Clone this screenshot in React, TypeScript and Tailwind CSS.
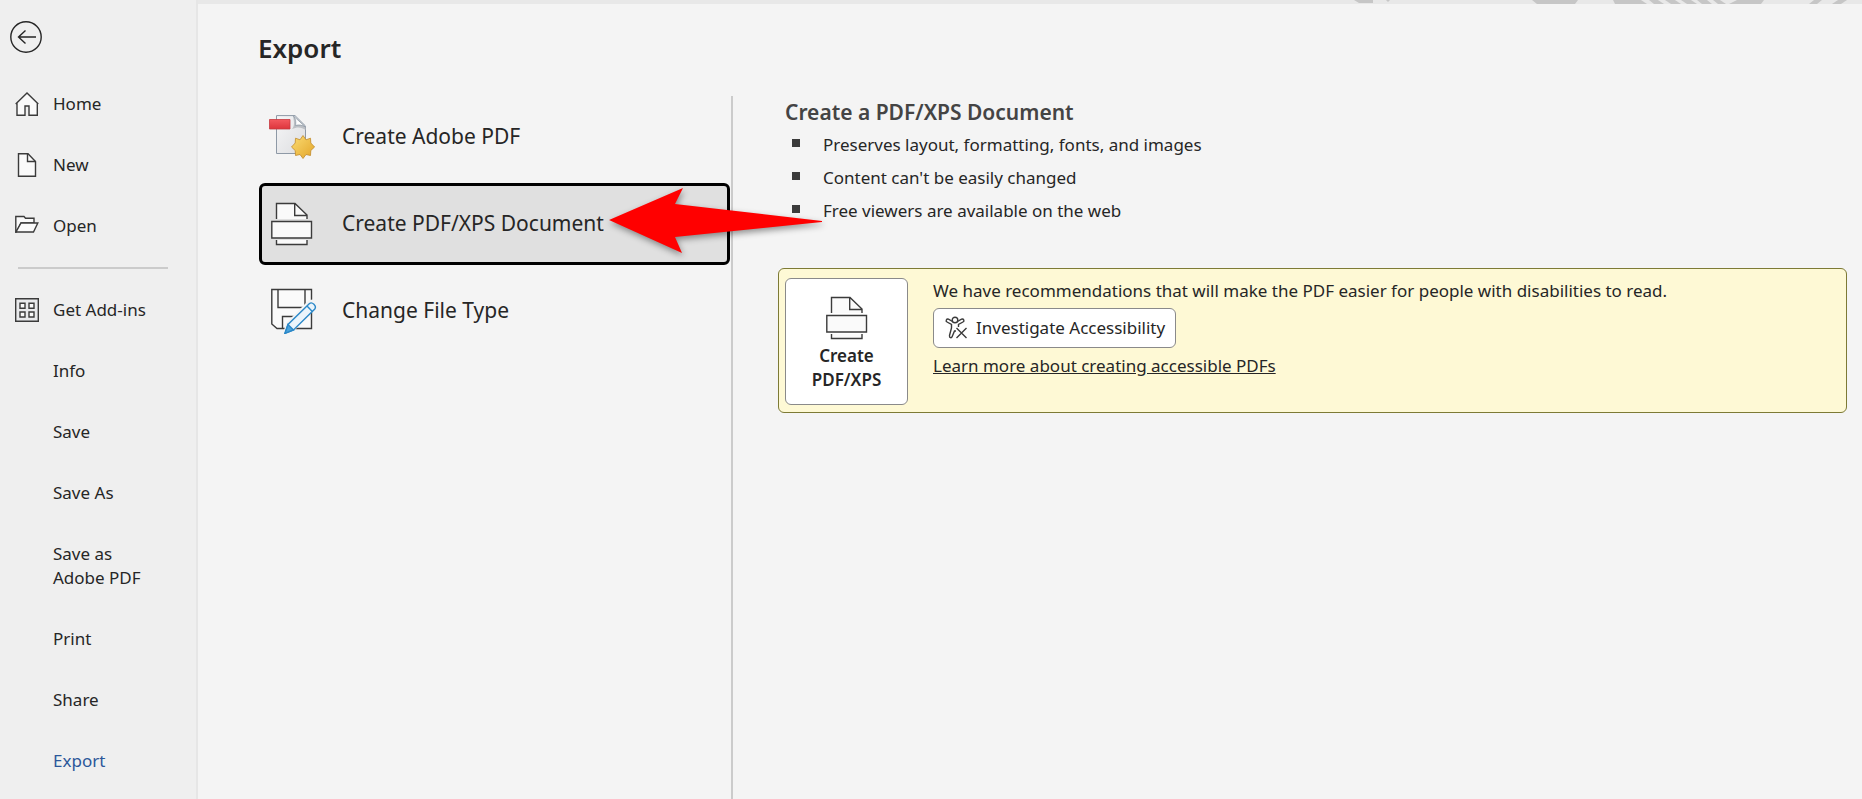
import React from 'react';

interface NavItem {
  label: string;
  icon?: React.ReactNode;
  active?: boolean;
}

const iconProps = {
  width: 24,
  height: 24,
  viewBox: '0 0 24 24',
  fill: '#fafafa',
  stroke: '#3b3b3b',
  strokeWidth: 1.4,
};

const HomeIcon = () => (
  <svg {...iconProps}>
    <path d="M2 10.5V23.3H10V14H14.3V23.3H22.3V10.5L12 1.5Z" stroke="none" />
    <path d="M.7 12 12 1 23.3 12M2 11V23.3H10V14H14V23.3H22.3V11" fill="none" />
  </svg>
);

const NewIcon = () => (
  <svg {...iconProps}>
    <path d="M3.5.8H13L20.5 8.5V23.3H3.5Z" />
    <path d="M12.5.8V8.5H20.5" fill="none" />
  </svg>
);

const OpenIcon = () => (
  <svg {...iconProps}>
    <path d="M.8 18V2.5H9L10.5 4.2H19V9H6L1.2 18Z" />
    <path d="M1 18 6 9H22.8L18.5 18Z" />
  </svg>
);

const AddInsIcon = () => (
  <svg {...iconProps}>
    <path d="M.7.7H23.3V23.3H.7Z" fill="#e9eaec" />
    <path d="M5 5.2H10V10.2H5ZM14 5.2H19V10.2H14ZM5 14H10V19H5ZM14 14H19V19H14Z" />
  </svg>
);

const PrinterIcon = () => (
  <svg width="42" height="44" viewBox="0 0 42 44" fill="#fafafa" stroke="#3b3b3b" strokeWidth="1.4">
    <path d="M5.5 17V1.5H24L36 13V17Z" stroke="none" />
    <path d="M5.5 17V1.5H24L36 13V17M23.7 1.5V13.5H36" fill="none" />
    <path d="M.8 19.5H40.5V36H.8Z" />
    <path d="M5.5 38V42.5H36V38" />
  </svg>
);

const AdobePdfIcon = () => (
  <svg width="46" height="44" viewBox="0 0 46 44">
    <defs>
      <linearGradient id="page" x1="0" y1="0" x2="1" y2="1">
        <stop offset="0" stopColor="#f6f6f7" />
        <stop offset="1" stopColor="#dcdde0" />
      </linearGradient>
      <linearGradient id="band" x1="0" y1="0" x2="0" y2="1">
        <stop offset="0" stopColor="#f4595e" />
        <stop offset="1" stopColor="#dd353c" />
      </linearGradient>
      <linearGradient id="star" x1="0" y1="0" x2="1" y2="1">
        <stop offset="0" stopColor="#fbdc74" />
        <stop offset="1" stopColor="#e3a528" />
      </linearGradient>
    </defs>
    <path d="M7.5.6H26L36.5 11V38.5H7.5Z" fill="url(#page)" stroke="#8e99a6" strokeWidth="1" />
    <path d="M24 1C25 6 26 11 23 14C28 11.5 33 12 36.5 15V11Z" fill="#bcbfc4" />
    <path d="M24 .6C27 4 27 7 26.5 10.5C30 9.5 33 10 36.5 12Z" fill="#fff" stroke="#8e99a6" strokeWidth=".8" />
    <path d="M.5 4.5H21V14H.5Z" fill="url(#band)" stroke="#c53a40" strokeWidth=".8" />
    <path
      d="M34 20.5 37 24.8 41.5 23.2 41.8 28 45.6 32 41.8 35.5 41.5 40.5 37 39.5 34 43.5 31 39.5 26.5 40.5 26.2 35.5 22.5 32 26.2 28 26.5 23.2 31 24.8Z"
      fill="url(#star)"
      stroke="#c08a2b"
      strokeWidth=".8"
    />
  </svg>
);

const FileTypeIcon = () => (
  <svg width="52" height="46" viewBox="-5 0 52 46" fill="none" stroke="#3b3b3b" strokeWidth="1.4">
    <path d="M.8 1.5H40.5V40.5H6L.8 36Z" fill="#fafafa" />
    <path d="M7 1.5V19.5H34V1.5M11.5 40.5V28.5H28" />
    <path d="M46 11 47 18 23 43 12 46 15 35 38 12Z" fill="#f4f4f4" stroke="none" />
    <path d="M14 45.3 17 36.5 38.5 15.5C41 13.5 46 17.5 43.8 21L22.5 42Z" fill="#eaf4fb" stroke="#2b88c8" />
    <path d="M14 45.3 17 36.5 22.5 42Z" fill="#4ba3db" stroke="#2b88c8" />
    <path d="M36 18 41.3 23.5" stroke="#2b88c8" />
  </svg>
);

const AccessibilityIcon = () => (
  <svg width="24" height="24" viewBox="0 0 24 24" fill="none" stroke="#3b3b3b" strokeWidth="1.4">
    <circle cx="11" cy="4" r="2.8" />
    <path d="M8.500 5.500 4.500 3.200C2.500 2.500 1.200 5 3 6L7.500 8.500V12L5.500 19.500C5.200 22 7.500 22.300 8.200 20.500L10.500 15H12M13.500 5.500 17.500 3.200C19.800 2.500 20.800 5 19 6L14.500 8.500V11" />
    <path d="M12.500 12 22.500 22M22.500 12 12.500 22" />
  </svg>
);

const primaryNav: NavItem[] = [
  { label: 'Home', icon: <HomeIcon /> },
  { label: 'New', icon: <NewIcon /> },
  { label: 'Open', icon: <OpenIcon /> },
];

const secondaryNav: NavItem[] = [
  { label: 'Get Add-ins', icon: <AddInsIcon /> },
  { label: 'Info' },
  { label: 'Save' },
  { label: 'Save As' },
  { label: 'Save as Adobe PDF' },
  { label: 'Print' },
  { label: 'Share' },
  { label: 'Export', active: true },
];

const benefits = [
  'Preserves layout, formatting, fonts, and images',
  "Content can't be easily changed",
  'Free viewers are available on the web',
];

const NavList: React.FC<{ items: NavItem[] }> = ({ items }) => (
  <ul className="flex flex-col gap-px">
    {items.map((item) => (
      <li key={item.label}>
        <button
          className={`flex w-full items-center gap-3.5 py-[18px] pl-[15px] pr-8 text-left leading-6 ${
            item.active ? 'text-[#2b579a]' : ''
          }`}
        >
          <span className="flex w-6 shrink-0 justify-center">{item.icon}</span>
          <span>{item.label}</span>
        </button>
      </li>
    ))}
  </ul>
);

const Sidebar: React.FC = () => (
  <nav className="w-[198px] shrink-0 border-r-2 border-[#e6e6e6]">
    <button aria-label="Back" className="mt-5 ml-2.5 block">
      <svg width="32" height="34" viewBox="0 0 32 34" fill="none" stroke="#262626" strokeWidth="1.4">
        <circle cx="16" cy="17" r="15.2" />
        <path d="M26 17H8.5M15.5 10.5 8.5 17 15.5 23.5" />
      </svg>
    </button>
    <div className="mt-5">
      <NavList items={primaryNav} />
    </div>
    <hr className="my-[11px] mr-7 ml-[18px] border-t-2 border-[#cbcbcb]" />
    <NavList items={secondaryNav} />
  </nav>
);

const ExportOption: React.FC<{ label: string; icon: React.ReactNode; selected?: boolean }> = ({
  label,
  icon,
  selected,
}) => (
  <button
    className={`flex h-[82px] w-full items-center gap-6 rounded-md border-3 pl-1 text-left text-[21px] ${
      selected ? 'border-black bg-[#e0e0e0]' : 'border-transparent'
    }`}
  >
    <span className="flex w-[52px] shrink-0 justify-center">{icon}</span>
    {label}
  </button>
);

const Arrow: React.FC = () => (
  <svg
    className="pointer-events-none absolute top-[91px] left-[411px] drop-shadow-[1px_3px_3px_rgba(0,0,0,0.4)]"
    width="214"
    height="68"
    viewBox="0 0 214 68"
  >
    <path d="M0 33 74 1 66 17 213 34V35L66 50 73 66Z" fill="#ff0000" />
  </svg>
);

const BackdropStrip: React.FC = () => (
  <div className="flex h-1 justify-end bg-[#e8e8e8]">
    <svg width="522" height="4" viewBox="0 0 522 4" fill="#c6c6c6">
      <path d="M14 0H33V3H19ZM46 0H50L48 2ZM192 0H238L235 4H197ZM273 0H301L307 4H275ZM309 0H318L324 4H314ZM325 0H335L341 4H331ZM341 0H351L357 4H347ZM357 0H367L372 4H362ZM373 0H380L386 4H378ZM397 0H424L421 4H389ZM474 0H482L477 4H469ZM498 0H507L501 4H492Z" />
    </svg>
  </div>
);

const App: React.FC = () => {
  return (
    <div className="flex min-h-screen bg-[#efefef] font-['Noto_Sans',sans-serif] text-[17px] text-[#262626]">
      <Sidebar />

      <main className="flex min-w-0 flex-1 flex-col bg-[#f4f4f4]">
        <BackdropStrip />
        <h1 className="mt-6 ml-[60px] text-[26px] leading-10 font-semibold">Export</h1>

        <div className="mt-7 flex flex-1">
          {/* Export options */}
          <section className="relative w-[535px] shrink-0 border-r-2 border-[#cbcbcb] pr-px pl-[61px]">
            <div className="flex flex-col gap-[5px]">
              <ExportOption label="Create Adobe PDF" icon={<AdobePdfIcon />} />
              <ExportOption label="Create PDF/XPS Document" icon={<PrinterIcon />} selected />
              <ExportOption label="Change File Type" icon={<FileTypeIcon />} />
            </div>
            <Arrow />
          </section>

          {/* Details */}
          <section className="min-w-0 flex-1 pr-[15px] pl-[45px]">
            <h2 className="ml-[7px] text-[21px] leading-8 font-semibold text-[#444]">Create a PDF/XPS Document</h2>
            <ul className="ml-[14px]">
              {benefits.map((benefit) => (
                <li key={benefit} className="flex items-center gap-[23px] leading-[33px]">
                  <span className="mb-1 size-2 bg-[#3b3b3b]" />
                  {benefit}
                </li>
              ))}
            </ul>

            <div className="mt-[41px] flex gap-[25px] rounded-md border border-[#7d7a35] bg-[#fef9d5] px-1.5 pt-[9px] pb-[7px]">
              <button className="flex w-[123px] shrink-0 flex-col items-center gap-1 rounded-md border border-[#8a8a8a] bg-white pt-[17px] pb-3 leading-6 font-semibold">
                <PrinterIcon />
                Create PDF/XPS
              </button>
              <div className="flex flex-col items-start">
                <p className="leading-[26px]">
                  We have recommendations that will make the PDF easier for people with disabilities to read.
                </p>
                <button className="mt-1 flex h-10 items-center gap-2 rounded-md border border-[#8a8a8a] bg-white px-2.5">
                  <AccessibilityIcon />
                  Investigate Accessibility
                </button>
                <a href="#" className="mt-1 leading-7 underline">
                  Learn more about creating accessible PDFs
                </a>
              </div>
            </div>
          </section>
        </div>
      </main>
    </div>
  );
};

export default App;
